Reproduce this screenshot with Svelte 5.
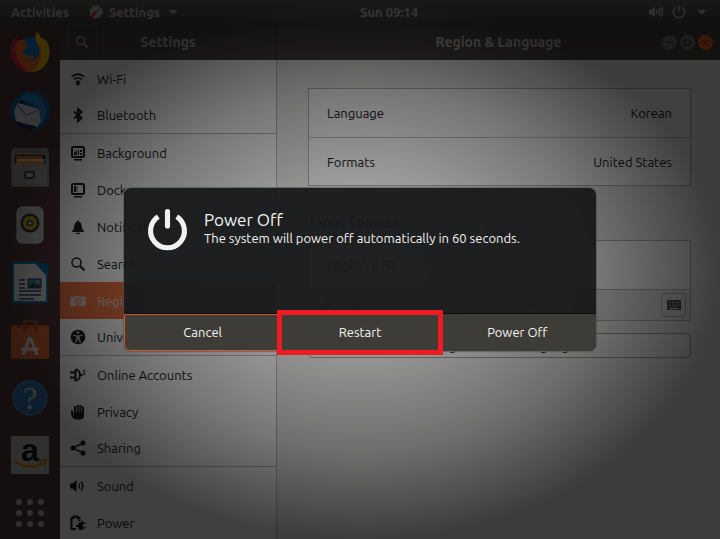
<script lang="ts">
  interface Panel { id: string; label: string; last?: boolean }

  const panels: Panel[] = [
    { id: 'wifi', label: 'Wi-Fi' },
    { id: 'bluetooth', label: 'Bluetooth', last: true },
    { id: 'background', label: 'Background' },
    { id: 'dock', label: 'Dock' },
    { id: 'bell', label: 'Notifications' },
    { id: 'search', label: 'Search' },
    { id: 'region', label: 'Region & Language' },
    { id: 'access', label: 'Universal Access', last: true },
    { id: 'accounts', label: 'Online Accounts' },
    { id: 'privacy', label: 'Privacy' },
    { id: 'sharing', label: 'Sharing', last: true },
    { id: 'sound', label: 'Sound' },
    { id: 'power', label: 'Power' },
  ];

  const formats = [
    { name: 'Language', value: 'Korean' },
    { name: 'Formats', value: 'United States' },
  ];

  const launchers = ['Firefox', 'Thunderbird', 'Files', 'Rhythmbox', 'Writer', 'Software', 'Help', 'Amazon', 'Applications'];

  let current = $state('region');
</script>

{#snippet glyph(id: string)}
  <svg class="glyph" viewBox="0 0 16 16" aria-hidden="true">
    {#if id === 'wifi'}
      <path class="line" d="M1.500 6Q8 .2 14.500 6M3.800 8.600Q8 5 12.200 8.600M5.800 11Q8 9.300 10.200 11" />
      <circle cx="8" cy="12.800" r="1.800" />
    {:else if id === 'bluetooth'}
      <path class="line thick" d="M4 4.500L11.500 11L8 14V2L11.500 5L4 11.500" />
    {:else if id === 'background'}
      <rect class="line thick" x="2" y="2" width="12" height="10" rx="1.500" />
      <path d="M4 10V8L7 5V10ZM8 5H9V10H8ZM10 5H12V7H10ZM10 8H12V10H10ZM4 14H12V15.500H4Z" />
    {:else if id === 'dock'}
      <rect class="line thick" x="2" y="2" width="12" height="10" rx="1.500" />
      <path d="M4 4H6V10H4ZM4 14H12V15.500H4Z" />
      <path d="M7 4V10" stroke="currentColor" stroke-width=".6" />
    {:else if id === 'bell'}
      <path d="M8 1.500C9 1.500 9.300 2.300 9.300 3C11.800 4 11.700 7 12 9C12.200 10.800 14 11 14 13H2C2 11 3.800 10.800 4 9C4.300 7 4.200 4 6.700 3C6.700 2.300 7 1.500 8 1.500ZM6 13.700H10A2 1.500 0 0 1 6 13.700Z" />
    {:else if id === 'search'}
      <circle class="line" cx="6.500" cy="6.500" r="4.500" />
      <path class="line thick" d="M10 10L14.500 14.500" />
    {:else if id === 'region'}
      <path fill-rule="evenodd" d="M.5 3.500Q3 4.500 5 3.500T10 3.500T15.500 3V12.500Q13 13.500 10.500 12.500T5 12.700T.5 13ZM8 4.500A3.500 3.500 0 1 0 8 11.500A3.500 3.500 0 1 0 8 4.500ZM8 5.500A2.500 2.500 0 1 1 8 10.500A2.500 2.500 0 1 1 8 5.500ZM7 7H9V9H7Z" />
    {:else if id === 'access'}
      <circle cx="8" cy="8" r="7.300" />
      <g class="hole">
        <circle cx="8" cy="3.600" r="1.400" />
        <path d="M3 5.500L7 6.200H9L13 5.500V6.800L9.800 7.500V9.500L11.300 13.500L10 14L8 10.200L6 14L4.700 13.500L6.200 9.500V7.500L3 6.800Z" />
      </g>
    {:else if id === 'accounts'}
      <path class="line thick" d="M0 5.500H5M0 10.500H5M5.500 2.500V13.500C11.500 13.500 11.500 2.500 5.500 2.500M10 8H12.500" />
      <path d="M15.500 3.500H14Q13 3.500 13 4.500T14 5.500T15 6.500T14 7.500H12.700" fill="none" stroke="currentColor" />
    {:else if id === 'privacy'}
      <path d="M1 6.500H3V9H4V2H6V8H6.700V1H8.700V8H9.400V1H11.400V8H12V2.500H14V10C14 15 12.500 15.500 9 15.500H6C3.500 15.500 1 12 1 9Z" />
    {:else if id === 'sharing'}
      <path class="line" d="M13 3L3 8L13 13" />
      <circle cx="13" cy="3" r="2.500" /><circle cx="3" cy="8" r="2.500" /><circle cx="13" cy="13" r="2.500" />
    {:else if id === 'sound'}
      <path d="M0 5.500H2.500L6.500 2V14L2.500 10.500H0Z" />
      <path class="line" d="M9 5.500Q10.500 8 9 10.500M11.300 3.500Q14.300 8 11.300 12.500" />
    {:else if id === 'power'}
      <path class="line thick" d="M6 14H1.500V3H3.500V1.500H7.500V3H9.500V6" />
      <path d="M6 10H8Q8 7 11 7H12V5.500H13V7.500H15.500V9H13V12H15.500V13.500H13V15H11Q8 15 8 12H6Z" />
    {:else if id === 'keyboard'}
      <path fill-rule="evenodd" d="M1 3H15V13H1ZM3 5V6H4V5ZM6 5V6H7V5ZM9 5V6H10V5ZM12 5V6H13V5ZM3 8V9H4V8ZM6 8V9H7V8ZM9 8V9H10V8ZM12 8V9H13V8ZM4 11V12H12V11Z" />
    {:else if id === 'plus'}
      <path class="line" d="M3 8H13M8 3V13" />
    {:else if id === 'minus'}
      <path class="line" d="M3 8H13" />
    {:else if id === 'up'}
      <path class="line" d="M4 10L8 6L12 10" />
    {:else if id === 'down'}
      <path class="line" d="M4 6L8 10L12 6" />
    {:else if id === 'volume'}
      <path d="M1 5.500H3.500L7 2.500V13.500L3.500 10.500H1Z" />
      <path class="line" d="M8.700 6Q9.800 8 8.700 10M10.700 4.500Q13 8 10.700 11.500M12.700 3Q16.200 8 12.700 13" />
    {:else if id === 'shutdown'}
      <path class="line" d="M4.800 3.300A5.700 5.700 0 1 0 11.200 3.300M8 1V7.500" />
    {:else if id === 'arrow'}
      <path d="M3.500 6H12.500L8 10.500Z" />
    {:else if id === 'tools'}
      <circle cx="8" cy="8" r="5.500" stroke="currentColor" stroke-width="2.500" stroke-dasharray="2.800 1.500" />
      <path d="M3 13L8 8" stroke="#c8342f" stroke-width="3" />
      <path d="M8 8L11.500 4.500" stroke="#8d8985" stroke-width="1.500" />
    {/if}
  </svg>
{/snippet}

{#snippet launcher(name: string)}
  <svg viewBox="0 0 40 40" aria-hidden="true">
    {#if name === 'Firefox'}
      <circle cx="21" cy="19" r="14" fill="#0b79c9" />
      <path d="M1 14Q3 9 5 7L8 9Q12 6 16 8L15 12L19 14L13 19Q14 24 19 24Q23 22 25 25Q20 30 13 27Q22 32 28 25Q32 19 27 12Q24 6 27 0Q30 3 31 6Q38 7 39.500 18C40 31 32 40 20 40C8 40 -1 29 1 14Z" fill="#f36a20" />
      <path d="M27 0Q30 3 31 6Q38 7 39.500 18C40 31 32 40 21 40Q30 34 31 23Q31 14 27 10Q24 5 27 0Z" fill="#f5bd18" />
      <path d="M1 14Q3 9 5 7L8 9L5 15Q4 28 18 39.500C7 39 -1 28 1 14Z" fill="#d72654" />
    {:else if name === 'Thunderbird'}
      <path d="M8 6Q13 0 23 1Q30 0 32 4Q40 9 40 21C40 32 33 40 22 40L26 36L13 38L15 35L7 34C1 30 -1 23 1 15Q3 9 8 6Z" fill="#17609e" />
      <path d="M10 9Q17 0 26 6Q36 11 36 23Q35 31 29 36Q32 25 29 18Q22 11 10 9Z" fill="#2389c4" />
      <path d="M8 13L29 19L31 31L27 37L6 31L4 20Z" fill="#cfd3d7" />
      <path d="M7 15L16 25L29 20" fill="none" stroke="#76838d" stroke-width="1.200" />
      <path d="M4 31L14 34L26 36L20 40L13 37L15 40L9 36Z" fill="#281f52" />
      <circle cx="12" cy="12" r="1.500" fill="#111" />
    {:else if name === 'Files'}
      <path d="M3 1H37L39 5V39H1V5Z" fill="#8a8886" />
      <path d="M5 8H35V18H5Z" fill="#292929" />
      <path d="M6 9H32V17H6Z" fill="#c96f31" />
      <path d="M7 12H34V14H7Z" fill="#eed5b0" />
      <path d="M7 14H34V17H7Z" fill="#e08a3e" />
      <rect x="3" y="17" width="34" height="20" fill="#a3a19f" />
      <rect x="15" y="25" width="9" height="6" rx="1" fill="#b4b4b4" stroke="#252525" stroke-width="1.500" />
      <path d="M2 39H38" stroke="#bbb" />
    {:else if name === 'Rhythmbox'}
      <rect x="7" y="2" width="26" height="36" rx="5" fill="#bcbbb9" stroke="#e1e0de" />
      <circle cx="20" cy="18" r="9.500" fill="#303030" />
      <circle cx="20" cy="18" r="7" fill="#baa81b" />
      <circle cx="20" cy="18" r="3.500" fill="#454a4d" /><circle cx="20" cy="18" r="1.500" fill="#ccc" />
      <circle cx="26" cy="31" r="3" fill="#cccbc9" />
    {:else if name === 'Writer'}
      <path d="M3 0H26L37 12V39H3Z" fill="#dedede" stroke="#0875a6" stroke-width="2" />
      <path d="M26 0H38V12Z" fill="#05679a" />
      <path d="M9 17H15M9 21H15M9 25H15M9 28H31M9 32H31M9 36H24" stroke="#20406d" stroke-width="1.500" />
      <rect x="18" y="16" width="13" height="9" fill="#3883a6" stroke="#24374b" />
      <path d="M19 25L23 19L26 23L28 21L31 25Z" fill="#283b35" /><circle cx="28" cy="19" r="1.300" fill="#e9bd3e" />
    {:else if name === 'Software'}
      <path d="M1 5H39V39H1Z" fill="#dd6937" /><path d="M1 5H39V8H1Z" fill="#c65828" />
      <path d="M14 11V3Q14 1 16 1H24Q26 1 26 3V11" fill="none" stroke="#a74b28" stroke-width="2.500" />
      <text x="20" y="35" text-anchor="middle" class="store">A</text>
      <path d="M11 29H29" stroke="#e5e1dd" stroke-width="2.500" />
    {:else if name === 'Help'}
      <circle cx="20" cy="20" r="17" fill="#2f77ad" stroke="#498aba" stroke-width="1.500" />
      <text x="20" y="31" text-anchor="middle" class="query">?</text>
    {:else if name === 'Amazon'}
      <rect x="1" y="1" width="38" height="38" rx="1" fill="#bdbdbd" />
      <text x="20" y="26" text-anchor="middle" class="shop">a</text>
      <path d="M4 26Q19 36 33 28" fill="none" stroke="#d68516" stroke-width="2.500" />
      <path d="M29 26L36 25L34 31" fill="none" stroke="#d68516" stroke-width="2" />
    {:else}
      <g fill="#bcb9b8">
        {#each [9, 20, 31] as y}
          {#each [9, 20, 31] as x}
            <circle cx={x} cy={y} r="3" />
          {/each}
        {/each}
      </g>
    {/if}
  </svg>
{/snippet}

<div class="desktop">
  <header class="topbar">
    <nav>
      <button>Activities</button>
      <button class="appmenu">{@render glyph('tools')}Settings{@render glyph('arrow')}</button>
    </nav>
    <time>Sun 09:14</time>
    <button class="status" aria-label="System menu">
      {@render glyph('volume')}{@render glyph('shutdown')}{@render glyph('arrow')}
    </button>
  </header>

  <div class="workspace">
    <aside class="launchers">
      {#each launchers as name}
        <button aria-label={name}>{@render launcher(name)}</button>
      {/each}
    </aside>

    <section class="window">
      <div class="titlebar side">
        <button class="find" aria-label="Search settings">{@render glyph('search')}</button>
        <h1>Settings</h1>
      </div>
      <div class="titlebar main">
        <h1>Region &amp; Language</h1>
        <div class="controls">
          <button aria-label="Minimize"><svg viewBox="0 0 15 15"><path d="M4 7.500H11" /></svg></button>
          <button aria-label="Maximize"><svg viewBox="0 0 15 15"><path d="M4.500 5H10.500V10H4.500Z" /></svg></button>
          <button class="close" aria-label="Close"><svg viewBox="0 0 15 15"><path d="M5 5L10 10M10 5L5 10" /></svg></button>
        </div>
      </div>

      <nav class="panels">
        {#each panels as panel}
          <button class:last={panel.last} class:current={current === panel.id} onclick={() => (current = panel.id)}>
            {@render glyph(panel.id)}{panel.label}
          </button>
        {/each}
      </nav>

      <main>
        <div class="list">
          {#each formats as row}
            <button class="row"><span>{row.name}</span><span>{row.value}</span></button>
          {/each}
        </div>
        <h2>Input Sources</h2>
        <div class="list">
          <div class="row">English (US)</div>
          <div class="tools">
            <button aria-label="Add">{@render glyph('plus')}</button>
            <button aria-label="Remove">{@render glyph('minus')}</button>
            <span class="space"></span>
            <button aria-label="Move up">{@render glyph('up')}</button>
            <button aria-label="Move down">{@render glyph('down')}</button>
            <span class="space"></span>
            <button aria-label="Show layout">{@render glyph('keyboard')}</button>
          </div>
        </div>
        <button class="manage">Manage Installed Languages</button>
      </main>
    </section>
  </div>

  <div class="shade">
    <div class="dialog" role="alertdialog" aria-labelledby="dialog-title" aria-describedby="dialog-text">
      <div class="message">
        <svg class="off" viewBox="0 0 40 42" aria-hidden="true">
          <path d="M11 8A16.500 16.500 0 1 0 29 8" /><path d="M20 3V17" class="stem" />
        </svg>
        <div>
          <h2 id="dialog-title">Power Off</h2>
          <p id="dialog-text">The system will power off automatically in 60 seconds.</p>
        </div>
      </div>
      <div class="actions">
        <button class="cancel">Cancel</button>
        <button class="restart">Restart</button>
        <button>Power Off</button>
      </div>
    </div>
  </div>
</div>

<style>
  :global(body) {
    margin: 0;
    background: #3c3b37;
  }
  .desktop {
    position: relative;
    display: flex;
    flex-direction: column;
    height: 100vh;
    overflow: hidden;
    font-family: Ubuntu, "Noto Sans", sans-serif;
    font-size: 13px;
    line-height: 18px;
    color: #1c1c1c;
  }
  * {
    box-sizing: border-box;
  }
  button {
    padding: 0;
    border: 0;
    background: none;
    color: inherit;
    font: inherit;
  }
  h1, h2, p {
    margin: 0;
    font-size: 14px;
    font-weight: 700;
  }
  svg {
    display: block;
    overflow: visible;
  }
  .glyph {
    flex: none;
    width: 16px;
    height: 16px;
    fill: currentColor;
  }
  .line {
    fill: none;
    stroke: currentColor;
    stroke-width: 1.5;
  }
  .thick {
    stroke-width: 2;
  }
  .hole {
    fill: #b5b5b5;
  }

  .topbar {
    display: flex;
    flex: none;
    align-items: center;
    height: 24px;
    background: linear-gradient(#63625a, #3f3e39);
    color: #bfbbb2;
    font-weight: 700;
  }
  .topbar nav {
    display: flex;
    flex: 0 0 50%;
    gap: 19px;
    padding-left: 11px;
  }
  .topbar time {
    flex: 1;
  }
  .appmenu, .status {
    display: flex;
    align-items: center;
  }
  .appmenu {
    gap: 5px;
  }
  .status {
    gap: 7px;
    padding-right: 10px;
  }

  .workspace {
    display: flex;
    flex: 1;
    min-height: 0;
  }
  .launchers {
    display: flex;
    flex: none;
    flex-direction: column;
    justify-content: space-between;
    align-items: center;
    width: 60px;
    padding: 8px 0 6px;
    background: #4f363b;
  }
  .launchers svg {
    width: 40px;
    height: 40px;
  }
  .store {
    fill: #e5e1dd;
    font: bold 24px Lato, sans-serif;
  }
  .query {
    fill: #dedede;
    font: 32px "Liberation Serif", serif;
  }
  .shop {
    fill: #151515;
    font: bold 32px "Liberation Sans", sans-serif;
  }

  .window {
    display: grid;
    flex: 1;
    grid-template-rows: 36px 1fr;
    grid-template-columns: 217px 1fr;
    min-width: 0;
    background: #f2f1f0;
  }
  .titlebar {
    display: grid;
    grid-template-columns: 1fr auto 1fr;
    align-items: center;
    padding: 0 7px;
    background: linear-gradient(#3f3e39, #4b4943);
    color: #b3afa6;
  }
  .titlebar h1 {
    grid-column: 2;
  }
  .side {
    border-right: 1px solid #35342f;
  }
  .find {
    display: grid;
    place-items: center;
    width: 30px;
    height: 32px;
    border: 1px solid #5a5851;
    border-radius: 4px;
  }
  .find .glyph {
    width: 14px;
    height: 14px;
  }
  .controls {
    display: flex;
    justify-content: flex-end;
    gap: 3px;
  }
  .controls button {
    width: 15px;
    height: 15px;
    border-radius: 50%;
    background: #75736b;
  }
  .controls .close {
    background: #ed5b2c;
  }
  .controls path {
    fill: none;
    stroke: #292824;
  }

  .panels {
    min-height: 0;
    border-right: 1px solid #bdbbb8;
    background: #fff;
  }
  .panels button {
    display: flex;
    align-items: center;
    gap: 11px;
    width: 100%;
    height: 37px;
    padding-left: 10px;
    text-align: left;
    white-space: nowrap;
  }
  .panels .last {
    border-bottom: 1px solid #bdbbb8;
  }
  .panels .current {
    background: #ec7443;
    color: #d6d2cf;
  }

  main {
    padding: 28px 29px 0 31px;
  }
  .list {
    border: 1px solid #b6b4b0;
    background: #fff;
  }
  .row {
    display: flex;
    justify-content: space-between;
    align-items: center;
    width: 100%;
    height: 48px;
    padding: 0 18px;
  }
  .row + .row {
    border-top: 1px solid #c8c6c3;
  }
  main h2 {
    padding: 27px 2px 9px;
  }
  .tools {
    display: flex;
    gap: 4px;
    padding: 3px 4px;
    border-top: 1px solid #b6b4b0;
    background: #eae8e6;
  }
  .tools button {
    display: grid;
    place-items: center;
    width: 25px;
    height: 24px;
    border: 1px solid #b6b4b0;
    border-radius: 4px;
  }
  .tools .glyph {
    color: #55534f;
  }
  .space {
    flex: 1;
  }
  .manage {
    width: 100%;
    height: 25px;
    margin-top: 12px;
    border: 1px solid #a3a09b;
    border-radius: 4px;
    background: #f5f4f3;
  }

  .shade {
    position: absolute;
    inset: 0;
    display: grid;
    place-items: center;
    background: radial-gradient(ellipse closest-side, rgb(0 0 0 / 26%), rgb(0 0 0 / 39%) 33%, rgb(0 0 0 / 54%) 67%, rgb(0 0 0 / 75%));
  }
  .dialog {
    width: 472px;
    max-width: 100%;
    border-radius: 7px;
    background: rgb(25 27 29 / 97%);
    box-shadow: 0 0 1px 1px rgb(80 80 78 / 60%);
    color: #f4f4f2;
  }
  .message {
    display: flex;
    gap: 16px;
    height: 125px;
    padding: 20px 23px;
  }
  .off {
    width: 41px;
    height: 44px;
    fill: none;
    stroke: #f2f1ef;
    stroke-width: 5;
  }
  .stem {
    stroke-linecap: round;
  }
  .dialog h2 {
    padding-top: 2px;
    font-size: 17px;
    font-weight: 400;
    line-height: 20px;
  }
  .dialog p {
    font-size: 13px;
    font-weight: 400;
    line-height: 16px;
  }
  .actions {
    display: grid;
    grid-template-columns: repeat(3, 1fr);
    height: 38px;
    border-top: 1px solid #08090a;
    border-radius: 0 0 7px 7px;
    background: #3e3c36;
  }
  .actions button {
    padding-bottom: 2px;
  }
  .cancel {
    border: 1px solid #d4552b;
    border-bottom-left-radius: 7px;
  }
  .restart {
    position: relative;
  }
  .restart::after {
    position: absolute;
    inset: -4px;
    border: 5px solid #ed1c24;
    content: "";
  }
</style>
